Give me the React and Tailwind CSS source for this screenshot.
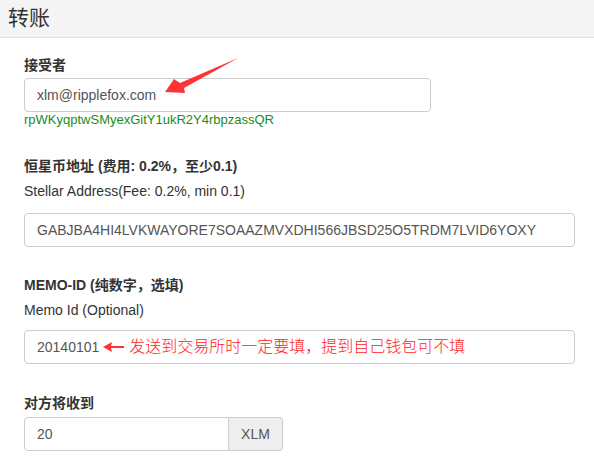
import React from 'react';

const font = { fontFamily: '"Liberation Sans", "Noto Sans CJK SC", Arial, sans-serif' };

const Field = ({ value, className = '', children }) => (
    <div className={`relative h-[34px] border border-[#ccc] rounded-[4px] bg-white flex items-center px-3 text-[14px] text-[#555] ${className}`}>
        <span>{value}</span>
        {children}
    </div>
);

export default function App() {
    return (
        <div className="relative w-[594px] h-[458px] overflow-hidden bg-white text-[#333]" style={font}>
            <div className="h-[38px] bg-[#f5f5f5] border-b border-[#ddd] flex items-center px-2">
                <h3 className="text-[21px] leading-none text-[#333] -mt-[3px]">转账</h3>
            </div>

            <div className="px-6 pt-[17px]">
                <label className="block font-bold text-[14px] leading-[20px]">接受者</label>
                <Field value="xlm@ripplefox.com" className="mt-[3px] w-[407px]" />
                <div className="text-[13px] leading-[16px] text-[#1c8a1c]">rpWKyqptwSMyexGitY1ukR2Y4rbpzassQR</div>

                <label className="block mt-[28px] font-bold text-[14px] leading-[20px]">恒星币地址 (费用: 0.2%，至少0.1)</label>
                <div className="mt-[5px] text-[14px] leading-[20px]">Stellar Address(Fee: 0.2%, min 0.1)</div>
                <Field value="GABJBA4HI4LVKWAYORE7SOAAZMVXDHI566JBSD25O5TRDM7LVID6YOXY" className="mt-[12px] w-[551px]" />

                <label className="block mt-[28px] font-bold text-[14px] leading-[20px]">MEMO-ID (纯数字，选填)</label>
                <div className="mt-[5px] text-[14px] leading-[20px]">Memo Id (Optional)</div>
                <Field value="20140101" className="mt-[10px] w-[551px]">
                    <svg width="22" height="12" viewBox="0 0 22 12" className="ml-[4px]">
                        <polygon points="0,6 9,1 8,5 21,5 21,7 8,7 9,11" fill="#f33" />
                    </svg>
                    <span className="ml-[4px] text-[16px] font-light text-[#f22]">发送到交易所时一定要填，提到自己钱包可不填</span>
                </Field>

                <label className="block mt-[29px] font-bold text-[14px] leading-[20px]">对方将收到</label>
                <div className="mt-[4px] flex w-[259px] h-[34px] text-[14px]">
                    <div className="flex-1 border border-[#ccc] rounded-l-[4px] flex items-center px-3 text-[#555]">20</div>
                    <div className="w-[54px] border border-l-0 border-[#ccc] rounded-r-[4px] bg-[#eee] flex items-center justify-center text-[#555]">XLM</div>
                </div>
            </div>

            <svg className="absolute left-0 top-0 pointer-events-none" width="594" height="458">
                <polygon points="165,92 174,79 180,83 238,58 184,88 185,93" fill="#f33" />
            </svg>
        </div>
    );
}
